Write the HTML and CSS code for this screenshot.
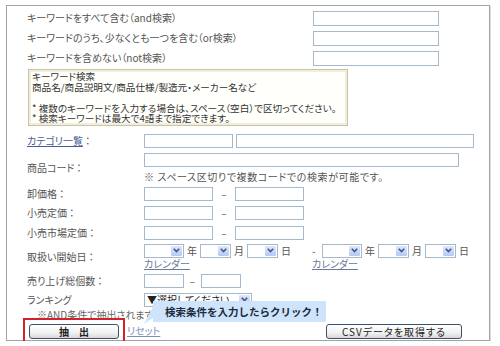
FILE: index.html
```html
<!DOCTYPE html>
<html lang="ja">
  <head>
    <meta charset="UTF-8" />
    <title>商品検索</title>
    <link rel="stylesheet" href="styles.css">
  </head>
  <body>
    <div class="frame">
      <div class="kw-row">
        <span class="kw-label">キーワードをすべて含む（and検索）</span>
        <input type="text" class="kw-input" />
      </div>
      <div class="kw-row">
        <span class="kw-label">キーワードのうち、少なくとも一つを含む（or検索）</span>
        <input type="text" class="kw-input" />
      </div>
      <div class="kw-row">
        <span class="kw-label">キーワードを含めない（not検索）</span>
        <input type="text" class="kw-input" />
      </div>

      <div class="help">
        <p>キーワード検索</p>
        <p>商品名/商品説明文/商品仕様/製造元・メーカー名など</p>
        <p>&nbsp;</p>
        <p>* 複数のキーワードを入力する場合は、スペース（空白）で区切ってください。</p>
        <p>* 検索キーワードは最大で4語まで指定できます。</p>
      </div>

      <div class="row row-cat">
        <div class="label"><a href="#" class="cat-link">カテゴリ一覧</a> ：</div>
        <div class="field">
          <input type="text" class="w-cat1" />
          <input type="text" class="w-cat2" />
        </div>
      </div>

      <div class="row row-code">
        <div class="label">商品コード ：</div>
        <div class="field field-col">
          <input type="text" class="w-code" />
          <p class="note">※ スペース区切りで複数コードでの検索が可能です。</p>
        </div>
      </div>

      <div class="row row-price">
        <div class="label">卸価格 ：</div>
        <div class="field">
          <input type="text" class="w-price" />
          <span class="dash">–</span>
          <input type="text" class="w-price" />
        </div>
      </div>

      <div class="row row-retail">
        <div class="label">小売定価 ：</div>
        <div class="field">
          <input type="text" class="w-price" />
          <span class="dash">–</span>
          <input type="text" class="w-price" />
        </div>
      </div>

      <div class="row row-market">
        <div class="label">小売市場定価 ：</div>
        <div class="field">
          <input type="text" class="w-price" />
          <span class="dash">–</span>
          <input type="text" class="w-price" />
        </div>
      </div>

      <div class="row row-date">
        <div class="label">取扱い開始日 ：</div>
        <div class="field">
          <div class="date-group">
            <div class="date-line">
              <span class="select w-year"><span class="arrow"><svg viewBox="0 0 7 5" width="7" height="5"><path d="M0.8 0.8 3.5 3.6 6.2 0.8" /></svg></span></span>
              <span class="unit">年</span>
              <span class="select w-md"><span class="arrow"><svg viewBox="0 0 7 5" width="7" height="5"><path d="M0.8 0.8 3.5 3.6 6.2 0.8" /></svg></span></span>
              <span class="unit">月</span>
              <span class="select w-md"><span class="arrow"><svg viewBox="0 0 7 5" width="7" height="5"><path d="M0.8 0.8 3.5 3.6 6.2 0.8" /></svg></span></span>
              <span class="unit">日</span>
            </div>
            <a href="#" class="cal-link">カレンダー</a>
          </div>
          <div class="date-group">
            <div class="date-line">
              <span class="date-dash">-</span>
              <span class="select w-year"><span class="arrow"><svg viewBox="0 0 7 5" width="7" height="5"><path d="M0.8 0.8 3.5 3.6 6.2 0.8" /></svg></span></span>
              <span class="unit">年</span>
              <span class="select w-md"><span class="arrow"><svg viewBox="0 0 7 5" width="7" height="5"><path d="M0.8 0.8 3.5 3.6 6.2 0.8" /></svg></span></span>
              <span class="unit">月</span>
              <span class="select w-md"><span class="arrow"><svg viewBox="0 0 7 5" width="7" height="5"><path d="M0.8 0.8 3.5 3.6 6.2 0.8" /></svg></span></span>
              <span class="unit">日</span>
            </div>
            <a href="#" class="cal-link">カレンダー</a>
          </div>
        </div>
      </div>

      <div class="row row-sales">
        <div class="label">売り上げ総個数 ：</div>
        <div class="field">
          <input type="text" class="w-sales" />
          <span class="dash dash-sm">–</span>
          <input type="text" class="w-sales" />
        </div>
      </div>

      <div class="row row-rank">
        <div class="label">ランキング</div>
        <div class="field">
          <span class="select select-rank">
            <span class="select-text">▼選択してください。</span>
            <span class="arrow"><svg viewBox="0 0 7 5" width="7" height="5"><path d="M0.8 0.8 3.5 3.6 6.2 0.8" /></svg></span>
          </span>
        </div>
      </div>

      <p class="and-note">※AND条件で抽出されます</p>

      <div class="buttons">
        <div class="buttons-left">
          <span class="extract-wrap">
            <button type="submit" class="btn btn-extract">抽　出</button>
          </span>
          <a href="#" class="reset-link">リセット</a>
        </div>
        <button type="button" class="btn btn-csv">CSVデータを取得する</button>
      </div>

      <div class="tip">検索条件を入力したらクリック！</div>
    </div>
  </body>
</html>
```

FILE: styles.css
```css
body {
  margin: 0;
  padding: 5px 0 0 6px;
  background-color: #fff;
  font-family: "Noto Sans CJK JP", sans-serif;
  font-size: 10px;
  line-height: 14px;
  color: #555;
  font-feature-settings: "palt";
}

p {
  margin: 0;
}

input {
  box-sizing: border-box;
  height: 14px;
  margin: 0;
  padding: 0;
  border: 1px solid #a5b9ce;
  background-color: #fff;
  font: inherit;
}

.frame {
  position: relative;
  width: 484px;
  box-sizing: border-box;
  border: 1px solid #a3a3a3;
  box-shadow: 1px 1px 0 #dcdcdc;
  padding: 2px 0 1px 20px;
}

/* keyword rows */
.kw-row {
  display: flex;
  align-items: center;
  height: 20px;
}

.kw-label {
  width: 286px;
}

.kw-input {
  width: 126px;
  height: 15px;
}

.help {
  width: 320px;
  box-sizing: border-box;
  margin: 1px 0 0 1px;
  padding: 1px 2px 1px 3px;
  border: 1px solid #c9c4a6;
  box-shadow: inset 0 0 0 2px #f1eedc;
  background-color: #fffffb;
  color: #333;
  font-size: 9.6px;
  line-height: 10.5px;
  white-space: nowrap;
}

/* form rows */
.row {
  display: flex;
  align-items: center;
}

.label {
  width: 117px;
  flex-shrink: 0;
}

.field {
  display: flex;
  align-items: center;
}

.field-col {
  flex-direction: column;
  align-items: flex-start;
}

.row-cat {
  margin-top: 8px;
}

.row-code {
  margin-top: 5px;
}

.row-price {
  margin-top: 3px;
}

.row-retail {
  margin-top: 5px;
}

.row-market {
  margin-top: 6px;
}

.row-date {
  margin-top: 4px;
}

.row-sales {
  margin-top: 4px;
}

.row-rank {
  margin-top: 5px;
}

.cat-link {
  color: #4a5a98;
}

.w-cat1 {
  width: 89px;
}

.w-cat2 {
  width: 238px;
  margin-left: 3px;
}

.w-code {
  width: 315px;
}

.note {
  margin-top: 3px;
  letter-spacing: 0.6px;
}

.w-price {
  width: 69px;
}

.w-sales {
  width: 40px;
}

.dash {
  width: 22px;
  text-align: center;
}

.dash-sm {
  width: 17px;
}

/* date selects */
.date-group {
  display: flex;
  flex-direction: column;
  width: 168px;
}

.date-line {
  display: flex;
  align-items: center;
  height: 14px;
}

.date-dash {
  width: 10px;
}

.unit {
  margin: 0 3px;
}

.cal-link {
  color: #6a789a;
  line-height: 12px;
}

.select {
  display: inline-flex;
  justify-content: flex-end;
  align-items: center;
  box-sizing: border-box;
  height: 14px;
  padding: 1px;
  border: 1px solid #a5b9ce;
  background-color: #fff;
}

.select .arrow {
  display: flex;
  align-items: center;
  justify-content: center;
  width: 11px;
  height: 10px;
  border-radius: 1px;
  background: linear-gradient(#dde7fc, #b6c8f3);
}

.select svg path {
  fill: none;
  stroke: #3f5684;
  stroke-width: 1.6;
}

.w-year {
  width: 40px;
}

.w-md {
  width: 31px;
}

.select-rank {
  width: 108px;
  justify-content: space-between;
}

.select-text {
  color: #222;
  line-height: 12px;
  padding-left: 1px;
}

.and-note {
  margin: 1px 0 0 10px;
  line-height: 13px;
  color: #666;
}

/* buttons */
.buttons {
  display: grid;
  grid-template-columns: 299px auto;
  align-items: center;
  height: 15px;
  margin-top: 3px;
}

.buttons-left {
  display: flex;
  align-items: center;
}

.btn {
  box-sizing: border-box;
  height: 15px;
  padding: 0;
  border: 1px solid #39536e;
  border-radius: 3px;
  background: linear-gradient(#fff, #f1f1f1 60%, #d8d8d8);
  font: inherit;
  line-height: 13px;
  color: #222;
}

.extract-wrap {
  position: relative;
  display: flex;
  margin-left: 2px;
}

/* red highlight frame around the extract button */
.extract-wrap::after {
  content: "";
  position: absolute;
  top: -6px;
  right: -6px;
  bottom: -5px;
  left: -6px;
  border: 2px solid #d3232a;
  pointer-events: none;
}

.btn-extract {
  width: 90px;
  font-weight: bold;
}

.btn-csv {
  width: 136px;
  letter-spacing: 1px;
}

.reset-link {
  margin-left: 8px;
  color: #7f8fb8;
}

/* callout */
.tip {
  position: absolute;
  left: 146px;
  top: 295px;
  width: 173px;
  height: 21px;
  box-sizing: border-box;
  padding-left: 12px;
  background-color: #cde4fb;
  color: #1c2a3a;
  font-size: 10.5px;
  font-weight: bold;
  line-height: 21px;
  font-feature-settings: normal;
}

.tip::before {
  content: "";
  position: absolute;
  left: -9px;
  top: 4px;
  width: 10px;
  height: 19px;
  background-color: #cde4fb;
  clip-path: polygon(100% 0, 100% 65%, 0 100%);
}
```
